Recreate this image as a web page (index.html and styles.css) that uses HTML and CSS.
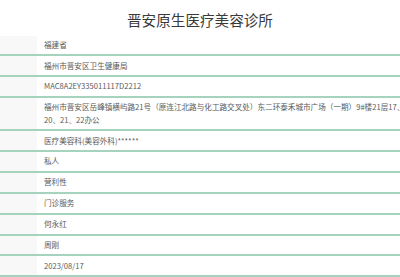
FILE: index.html
```html
<!DOCTYPE html>
<html lang="zh-CN">
<head>
<meta charset="utf-8">
<title>晋安原生医疗美容诊所</title>
<link rel="stylesheet" href="styles.css">
</head>
<body>
<div class="page">
  <h1 class="title">晋安原生医疗美容诊所</h1>
  <div class="table">
    <div class="row"><div class="label"></div><div class="value">福建省</div></div>
    <div class="row"><div class="label"></div><div class="value">福州市晋安区卫生健康局</div></div>
    <div class="row"><div class="label"></div><div class="value">MAC8A2EY335011117D2212</div></div>
    <div class="row"><div class="label"></div><div class="value">福州市晋安区岳峰镇横屿路21号（原连江北路与化工路交叉处）东二环泰禾城市广场（一期）9#楼21层17、18、19、20、21、22办公</div></div>
    <div class="row"><div class="label"></div><div class="value">医疗美容科(美容外科)******</div></div>
    <div class="row"><div class="label"></div><div class="value">私人</div></div>
    <div class="row"><div class="label"></div><div class="value">营利性</div></div>
    <div class="row"><div class="label"></div><div class="value">门诊服务</div></div>
    <div class="row"><div class="label"></div><div class="value">何永红</div></div>
    <div class="row"><div class="label"></div><div class="value">周刚</div></div>
    <div class="row"><div class="label"></div><div class="value">2023/08/17</div></div>
  </div>
</div>
</body>
</html>
```
FILE: styles.css
```css
html, body {
  margin: 0;
  padding: 0;
  background: #ffffff;
  overflow: hidden;
}
.page {
  width: 400px;
  font-family: "Noto Sans CJK SC", "Noto Sans", sans-serif;
  color: #555555;
}
.title {
  margin: 0;
  height: 35.5px;
  line-height: 40px;
  text-align: center;
  font-size: 14.6px;
  font-weight: 400;
  color: #3a3a3a;
}
.table {
  width: 447px;
}
.row {
  display: flex;
  border-bottom: 2px solid #a6d3be;
}
.label {
  flex: 0 0 37px;
  background: #f8f8f8;
}
.value {
  flex: 1 1 auto;
  padding: 3.22px 0 3.22px 7px;
  font-size: 7.6px;
  line-height: 12.4px;
  color: #5a5a5a;
}
```
